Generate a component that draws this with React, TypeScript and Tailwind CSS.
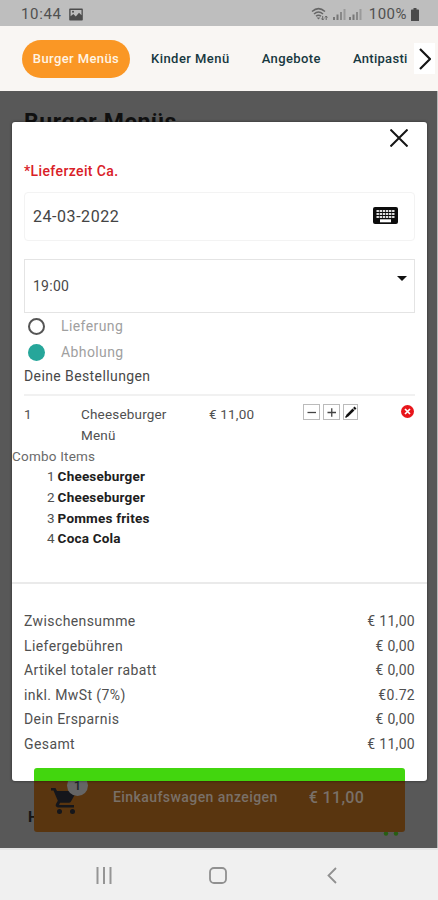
import { useState } from "react";
import { clsx } from "clsx";

const categories = [
  { name: "Burger Menüs", className: "w-[108px] shrink-0 rounded-full bg-[#fa9725] text-[#fff4e4] tracking-[0.4px]" },
  { name: "Kinder Menü", className: "ml-[21px] text-[#17383f] tracking-[0.45px]" },
  { name: "Angebote", className: "ml-[32px] text-[#17383f] tracking-[0.4px]" },
  { name: "Antipasti", className: "ml-[32px] text-[#17383f] tracking-[0.3px]" },
];

const comboItems = ["Cheeseburger", "Cheeseburger", "Pommes frites", "Coca Cola"];

const totals = [
  { label: "Zwischensumme", value: "€ 11,00" },
  { label: "Liefergebühren", value: "€ 0,00" },
  { label: "Artikel totaler rabatt", value: "€ 0,00" },
  { label: "inkl. MwSt (7%)", value: "€0.72" },
  { label: "Dein Ersparnis", value: "€ 0,00" },
  { label: "Gesamt", value: "€ 11,00" },
];

function SignalIcon() {
  return (
    <svg viewBox="0 0 14 14" className="h-[14px] w-[14px]" fill="#777">
      <rect x="0" y="10" width="2" height="3" />
      <rect x="3.5" y="7.5" width="2" height="5.5" />
      <rect x="7" y="5" width="2" height="8" fill="#888" />
      <rect x="10.5" y="2" width="2" height="11" fill="#9a9a9a" />
    </svg>
  );
}

function StatusBar() {
  return (
    <div className="flex h-[26px] items-center justify-between bg-[#bebebe] pl-[21px] pr-[19px] pt-[2px] text-[15px] text-[#505050]">
      <div className="flex items-center gap-[7px]">
        <span className="tracking-[0.65px]">10:44</span>
        <svg viewBox="0 0 14 13" className="h-[13px] w-[14px]">
          <path fillRule="evenodd" fill="#4c4c4c" d="M1 0.5h12a.8.8 0 0 1 .8.8v10.4a.8.8 0 0 1-.8.8H1a.8.8 0 0 1-.8-.8V1.300a.8.8 0 0 1 .8-.8ZM1.600 2v6.200L4.300 6l2.500 2.500L10 4.800l2.500 2.400V2Z" />
          <circle cx="4" cy="3.800" r="1" fill="#4c4c4c" />
        </svg>
      </div>
      <div className="flex items-center">
        <svg viewBox="0 0 18 14" className="mr-[4px] h-[14px] w-[18px]" fill="none" stroke="#666" strokeWidth="1.5">
          <path d="M1 4.500Q7.500-1.300 14 4.500" />
          <path d="M3 7Q7.500 3 12 7" />
          <path d="M5 9.300Q7.500 7.200 10 9.300" />
          <path d="M5.700 10.500L7.500 12.500L9.300 10.500Z" fill="#666" stroke="none" />
          <path d="M11.700 9V13M10.400 11.500L11.700 13L13 11.500M15.200 13V9M13.900 10.500L15.200 9L16.500 10.500" strokeWidth="1" />
        </svg>
        <SignalIcon />
        <span className="w-[2px]" />
        <SignalIcon />
        <span className="ml-[6px] tracking-[0.5px]">100%</span>
        <svg viewBox="0 0 8 13" className="ml-[4px] h-[13px] w-[8px]" fill="#4b4b4b">
          <path d="M2.500 0h3v1.500H7.300a.7.7 0 0 1 .7.7V13H0V2.200a.7.700 0 0 1 .7-.7H2.500Z" />
        </svg>
      </div>
    </div>
  );
}

function CategoryNav() {
  return (
    <div className="flex h-[65px] items-center bg-[#f9f6f3] pl-[22px]">
      <div className="flex flex-1 items-center overflow-hidden whitespace-nowrap text-[13px] font-medium">
        {categories.map((category) => (
          <span
            key={category.name}
            className={clsx("flex h-[38px] items-center justify-center", category.className)}
          >
            {category.name}
          </span>
        ))}
      </div>
      <button type="button" className="mr-[3px] flex h-[31px] w-[21px] shrink-0 items-center justify-center bg-white">
        <svg viewBox="0 0 12 22" className="h-[22px] w-[12px]" fill="none" stroke="#151515" strokeWidth="2.200">
          <path d="M1 1L11 11L1 21" />
        </svg>
      </button>
    </div>
  );
}

function DeliveryOption({ label, checked, onSelect }: { label: string; checked: boolean; onSelect: () => void }) {
  return (
    <button type="button" onClick={onSelect} className="flex h-[26px] w-full items-center pl-[4px]">
      <span
        className={clsx(
          "h-[17px] w-[17px] rounded-full",
          checked ? "bg-[#26a69a]" : "border-2 border-[#555]",
        )}
      />
      <span className="ml-[16px] text-[14px] tracking-[0.4px] text-[#a0a0a0]">{label}</span>
    </button>
  );
}

function QuantityButtons() {
  return (
    <div className="mt-[8px] flex h-[16px] gap-[3px]">
      {["M3.500 7.500H12", "M3.500 7.500H12M7.750 3.250V11.750"].map((d) => (
        <button key={d} type="button" className="h-[16px] w-[17px] border border-[#bbb]">
          <svg viewBox="0 0 15 14" className="h-[14px] w-[15px]" stroke="#444" strokeWidth="1.300">
            <path d={d} />
          </svg>
        </button>
      ))}
      <button type="button" className="h-[16px] w-[15px] border border-[#bbb]">
        <svg viewBox="0 0 13 14" className="h-[14px] w-[13px]" stroke="#111">
          <path d="M2.800 11.200L9.500 4.500" strokeWidth="2.600" />
          <path d="M10 4L11.500 2.500" strokeWidth="2.600" />
          <path d="M1.500 12.500L3.200 10.800" strokeWidth="1.600" />
        </svg>
      </button>
    </div>
  );
}

function OrderDialog() {
  const [pickup, setPickup] = useState(true);

  return (
    <div className="absolute left-[12px] top-[122px] flex h-[659px] w-[415px] flex-col rounded-[3px] bg-white text-[13.5px] text-[#505050] shadow-[0_0_3px_rgba(0,0,0,0.55)]">
      <div className="flex h-[37px] justify-end pr-[19px] pt-[7px]">
        <button type="button" className="h-[18px] w-[18px]">
          <svg viewBox="0 0 18 18" className="h-[18px] w-[18px]" stroke="#151515" strokeWidth="2">
            <path d="M0.500 0.500L17.500 17.500M17.500 0.500L0.500 17.500" />
          </svg>
        </button>
      </div>

      <div className="px-[12px]">
        <p className="h-[33px] text-[14px] font-medium leading-[24px] tracking-[0.38px] text-[#d92027]">*Lieferzeit Ca.</p>
        <div className="flex h-[49px] items-center justify-between rounded-[4px] border border-[#f3f3f3] pl-[8px] pr-[16px]">
          <span className="text-[16px] tracking-[0.55px] text-[#444]">24-03-2022</span>
          <svg viewBox="0 0 25 17" className="-mt-[2px] h-[17px] w-[25px]">
            <rect width="25" height="17" rx="2" fill="#0c0c0c" />
            <path d="M3.500 4H21.500M3.500 7H21.500M3.500 10H21.500" stroke="#e0e0e0" strokeWidth="2.200" strokeDasharray="2.400 0.720" />
            <rect x="7" y="12.300" width="11" height="3" fill="#fff" />
          </svg>
        </div>
        <div className="mt-[18px] flex h-[54px] justify-between border border-[#e4e4e4] pl-[8px] pr-[7px]">
          <span className="pt-[15px] text-[14px] leading-[22px] tracking-[0.25px] text-[#484848]">19:00</span>
          <svg viewBox="0 0 10 5" className="mt-[16px] h-[5px] w-[10px]">
            <path d="M0 0H10L5 5Z" fill="#111" />
          </svg>
        </div>
        <DeliveryOption label="Lieferung" checked={!pickup} onSelect={() => setPickup(false)} />
        <DeliveryOption label="Abholung" checked={pickup} onSelect={() => setPickup(true)} />
        <p className="h-[29px] text-[14px] leading-[23px] tracking-[0.4px] text-[#484848]">Deine Bestellungen</p>
        <div className="h-[2px] bg-[#f1f1f1]" />

        <div className="flex h-[50px] leading-[21px] tracking-[0.18px]">
          <span className="w-[57px] pt-[8px]">1</span>
          <span className="w-[128px] pr-[30px] pt-[8px]">Cheeseburger Menü</span>
          <span className="w-[94px] pt-[8px]">€ 11,00</span>
          <QuantityButtons />
          <button type="button" className="ml-auto mr-[1px] mt-[9px] h-[13px] w-[13px]">
            <svg viewBox="0 0 13 13" className="h-[13px] w-[13px]">
              <circle cx="6.500" cy="6.500" r="6.500" fill="#e8151b" />
              <path d="M4 4L9 9M9 4L4 9" stroke="#fff" strokeWidth="1.700" />
            </svg>
          </button>
        </div>
      </div>

      <p className="h-[20px] leading-[20px] tracking-[0.2px] text-[#6a6a6a]">Combo Items</p>
      <ol className="h-[116px] pl-[35px] leading-[20.8px]">
        {comboItems.map((item, index) => (
          <li key={index} className="flex gap-[3px]">
            <span>{index + 1}</span>
            <span className="font-bold tracking-[0.2px] text-[#202020]">{item}</span>
          </li>
        ))}
      </ol>

      <div className="h-[2px] shrink-0 bg-[#eaeaea]" />
      <div className="mt-[25px] px-[12px] text-[14px] leading-[24.5px]">
        {totals.map((row) => (
          <div key={row.label} className="flex justify-between">
            <span className="tracking-[0.4px]">{row.label}</span>
            <span className="tracking-[0.3px]">{row.value}</span>
          </div>
        ))}
      </div>
      <div className="ml-[22px] mt-auto h-[13px] w-[371px] shrink-0 rounded-t-[3px] bg-[#42d60e]" />
    </div>
  );
}

function CartBar() {
  return (
    <div className="absolute left-[34px] top-[769px] flex h-[63px] w-[371px] rounded-[3px] bg-[#59350f] text-[#797068]">
      <div className="relative ml-[17px] mt-[18px] h-[27px] w-[26px]">
        <svg viewBox="0 0 26 27" className="h-[27px] w-[26px]" fill="#15161b">
          <path d="M0 1H4.500L6 4H23.500a1.300 1.300 0 0 1 1.200 2L20 14.500a2.500 2.500 0 0 1-2.200 1.300H9L8 18H23v2.500H7a2.300 2.300 0 0 1-2-3.500l1.800-3.200L2.500 3.500H0Z" />
          <circle cx="8.500" cy="24.500" r="2.500" />
          <circle cx="21.500" cy="24.500" r="2.500" />
        </svg>
        <span className="absolute -top-[12px] left-[16px] flex h-[21px] w-[21px] items-center justify-center rounded-full bg-[#656565] text-[13px] font-medium text-[#20242b]">
          1
        </span>
      </div>
      <span className="ml-[36px] mt-[18px] text-[14px] font-medium leading-[20px] tracking-[0.43px]">Einkaufswagen anzeigen</span>
      <span className="ml-[31px] mt-[19px] text-[16px] font-medium leading-[20px] tracking-[0.35px]">€ 11,00</span>
    </div>
  );
}

function SystemNav() {
  return (
    <div className="flex h-[52px] items-center border-t-2 border-[#e4e4e4] bg-[#f0f0f0] pl-[96px]">
      <svg viewBox="0 0 16 17" className="h-[17px] w-[16px]" stroke="#959595" strokeWidth="2">
        <path d="M1.500 0V17M8 0V17M14.500 0V17" />
      </svg>
      <svg viewBox="0 0 18 17" className="ml-[97px] h-[17px] w-[18px]" fill="none" stroke="#909090" strokeWidth="1.800">
        <rect x="1" y="1" width="16" height="15" rx="4" />
      </svg>
      <svg viewBox="0 0 10 17" className="ml-[100px] h-[17px] w-[10px]" fill="none" stroke="#909090" strokeWidth="1.800">
        <path d="M9 1L1.500 8.500L9 16" />
      </svg>
    </div>
  );
}

export default function App() {
  return (
    <div className="relative flex h-[900px] w-[438px] flex-col overflow-hidden bg-[#f0f0f0] font-['Roboto',sans-serif]">
      <StatusBar />
      <CategoryNav />
      <div className="flex flex-1 flex-col justify-between border-r border-[#b8b8b8] bg-[#585858]">
        <h1 className="pl-[24px] pt-[18px] text-[23px] font-bold leading-[28px] tracking-[0.6px] text-[#101010]">Burger Menüs</h1>
        <div className="flex items-end justify-between pb-[12px] pl-[28px] pr-[38px]">
          <span className="pb-[9px] text-[15px] font-bold leading-[20px] text-[#151515]">H</span>
          <svg viewBox="0 0 16 8" className="h-[8px] w-[16px]" fill="#275e12">
            <circle cx="3" cy="5.500" r="2.200" />
            <circle cx="13" cy="5.500" r="2.200" />
          </svg>
        </div>
      </div>
      <SystemNav />
      <CartBar />
      <OrderDialog />
    </div>
  );
}
